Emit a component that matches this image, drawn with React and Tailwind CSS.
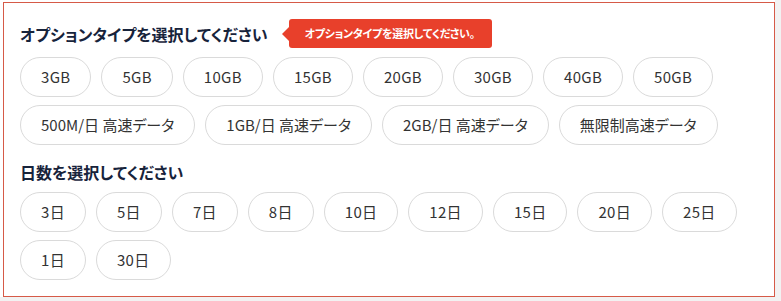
import React from 'react';

const gbOptions = ['3GB', '5GB', '10GB', '15GB', '20GB', '30GB', '40GB', '50GB'];
const dailyOptions = ['500M/日 高速データ', '1GB/日 高速データ', '2GB/日 高速データ', '無限制高速データ'];
const dayRows = [
    ['3日', '5日', '7日', '8日', '10日', '12日', '15日', '20日', '25日'],
    ['1日', '30日'],
];

const font = "font-['Noto_Sans_CJK_JP','Noto_Sans',sans-serif]";
const palt = "[font-feature-settings:'palt']";

const Pill = ({ label, className = '' }) => (
    <button className={`h-10 px-5 rounded-full border border-[#dadada] bg-white text-[15px] text-[#333] flex items-center whitespace-nowrap ${className}`}>
        {label}
    </button>
);

const PillRow = ({ items, pillClass }) => (
    <div className="flex gap-[10px]">
        {items.map(o => <Pill key={o} label={o} className={pillClass} />)}
    </div>
);

const App = () => {
    return (
        <div className={`w-[781px] h-[301px] bg-[#f2f2f2] ${font}`}>
            <div className="w-[775px] h-[297px] bg-white pl-[3px] pt-[2px]">
                <div className="w-[772px] h-[295px] border border-[#d65a48] px-4 pt-4">
                    {/* オプションタイプ */}
                    <div className="flex items-center h-[29px]">
                        <h2 className={`text-[16px] font-bold text-[#17233b] leading-none ${palt}`}>オプションタイプを選択してください</h2>
                        <div className="flex items-center ml-[14px]">
                            <div className="w-0 h-0 border-y-[7px] border-y-transparent border-r-[7px] border-r-[#e8402b]" />
                            <div className={`h-[29px] pl-4 pr-[17px] rounded-[3px] bg-[#e8402b] text-white text-[11px] tracking-[-0.3px] font-bold flex items-center ${palt}`}>
                                オプションタイプを選択してください。
                            </div>
                        </div>
                    </div>

                    <div className="flex flex-col gap-2 mt-[9px]">
                        <PillRow items={gbOptions} pillClass="tracking-[0.3px]" />
                        <PillRow items={dailyOptions} pillClass={palt} />
                    </div>

                    {/* 日数 */}
                    <h2 className={`text-[16px] font-bold text-[#17233b] leading-none mt-[19px] ${palt}`}>日数を選択してください</h2>

                    <div className="flex flex-col gap-2 mt-[12px]">
                        {dayRows.map((row, i) => <PillRow key={i} items={row} pillClass="tracking-[0.3px]" />)}
                    </div>
                </div>
            </div>
        </div>
    );
};

export default App;
